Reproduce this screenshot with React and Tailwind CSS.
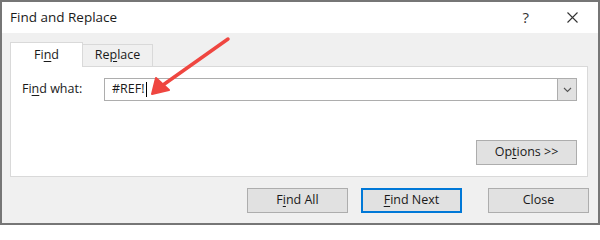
import React from 'react';

const font = { fontFamily: '"Open Sans", "Noto Sans", Arial, sans-serif' };

function Key({ children }) {
  return <span className="underline underline-offset-2">{children}</span>;
}

function Button({ children, primary, className = '' }) {
  return (
    <div
      className={`flex h-[25px] w-[101px] items-center justify-center bg-[#e1e1e1] text-[12.5px] text-[#1a1a1a] ${
        primary ? 'border-2 border-[#0078d7]' : 'border border-[#adadad]'
      } ${className}`}
    >
      <span>{children}</span>
    </div>
  );
}

export default function App() {
  return (
    <div className="relative h-[225px] w-[600px] border-2 border-[#767676] bg-[#f0f0f0]" style={font}>
      {/* Title bar */}
      <div className="flex h-[31px] items-center justify-between bg-white pl-[8px] pr-[20px]">
        <span className="text-[13.5px] text-[#1a1a1a]">Find and Replace</span>
        <div className="flex items-center gap-[38px] text-[#333]">
          <span className="text-[15px]">?</span>
          <svg width="11" height="11" viewBox="0 0 11 11">
            <path d="M0.5 0.5 L10.5 10.5 M10.5 0.5 L0.5 10.5" stroke="#333" strokeWidth="1.1" />
          </svg>
        </div>
      </div>

      <div className="pl-[8px] pr-[10px] pt-[9px]">
        {/* Tabs */}
        <div className="flex h-[24px] items-end">
          <div className="relative z-10 -mb-px flex h-[25px] w-[73px] items-center justify-center border border-b-0 border-[#d9d9d9] bg-white text-[12.5px] text-[#1a1a1a]">
            Fi<Key>n</Key>d
          </div>
          <div className="flex h-[22px] w-[70px] items-center justify-center border border-b-0 border-l-0 border-[#d9d9d9] bg-[#f0f0f0] text-[12.5px] text-[#1a1a1a]">
            Re<Key>p</Key>lace
          </div>
        </div>

        {/* Panel */}
        <div className="flex h-[111px] flex-col border border-[#d9d9d9] bg-white pl-[11px] pr-[10px] pt-[11px]">
          <div className="flex items-center">
            <span className="w-[82px] text-[12.5px] text-[#1a1a1a]">
              Fi<Key>n</Key>d what:
            </span>
            <div className="flex h-[23px] flex-1 items-center border border-[#adadad] bg-white">
              <span className="flex-1 pl-[7px] text-[12.5px] text-[#1a1a1a]">
                #REF!<span className="ml-px inline-block h-[15px] w-px bg-black align-middle" />
              </span>
              <div className="flex h-[21px] w-[19px] items-center justify-center border-l border-[#adadad] bg-[#e1e1e1]">
                <svg width="9" height="6" viewBox="0 0 9 6">
                  <path d="M1 1 L4.5 4.5 L8 1" fill="none" stroke="#555" strokeWidth="1.1" />
                </svg>
              </div>
            </div>
          </div>
          <div className="mt-auto mb-[11px] flex justify-end">
            <Button>
              Op<Key>t</Key>ions &gt;&gt;
            </Button>
          </div>
        </div>

        {/* Bottom buttons */}
        <div className="mt-[11px] flex justify-end">
          <Button>
            F<Key>i</Key>nd All
          </Button>
          <Button primary className="ml-[13px] w-[100px]">
            <Key>F</Key>ind Next
          </Button>
          <Button className="ml-[26px] -mr-[1px] w-[100px]">Close</Button>
        </div>
      </div>

      {/* Annotation arrow */}
      <svg className="pointer-events-none absolute left-0 top-0" width="600" height="225">
        <line x1="226" y1="37" x2="161" y2="83" stroke="#ef4640" strokeWidth="3.5" strokeLinecap="round" />
        <polygon points="150,92 154,76 167,88" fill="#ef4640" stroke="#ef4640" strokeWidth="2" strokeLinejoin="round" />
      </svg>
    </div>
  );
}
